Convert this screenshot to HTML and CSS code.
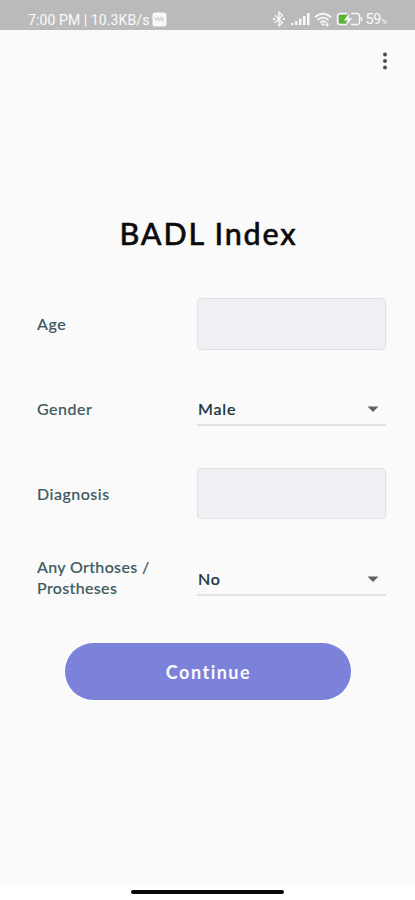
FILE: index.html
```html
<!DOCTYPE html>
<html lang="en">
<head>
<meta charset="utf-8">
<meta name="viewport" content="width=device-width, initial-scale=1">
<title>BADL Index</title>
<link rel="stylesheet" href="styles.css">
</head>
<body>
<header class="status">
  <div class="status-left">
    <span class="clock">7:00 PM | 10.3KB/s</span>
    <svg class="app" width="15" height="15" viewBox="0 0 15 15"><rect x=".5" y=".5" width="14" height="14" rx="2.5" fill="#f8f8f8"/><path d="M3 5.5l1.5 3 1.5-3 1.5 3 1.5-3 1.5 3 1-3" fill="none" stroke="#d4d4d4" stroke-width="1.3"/></svg>
  </div>
  <div class="status-right">
    <svg width="14" height="16" viewBox="0 0 14 16" fill="none" stroke="#f8f8f8" stroke-width="1.4"><path d="M3 4.200l7.400 7.200L7 14.700V1.300l3.400 3.300L3 11.800"/><path d="M1 8h2M11 8h2" stroke-width="1.8"/></svg>
    <svg width="20" height="14" viewBox="0 0 20 14" fill="#f8f8f8"><path d="M1 11h2.500v2H1zM5 9h2.500v4H5zM9 6.500h2.500v6.500H9zM13 4h2.500v9H13zM17 1h2.500v12H17z"/></svg>
    <svg width="18" height="15" viewBox="0 0 18 15" fill="none" stroke="#f8f8f8" stroke-width="1.8"><path d="M1 5.300Q9-1.700 17 5.300M3.500 8Q9 3.200 14.500 8M6 10.500Q9 8 11.500 10.300"/><path d="M7.500 11.500L9 13.200l1.500-1.700M13 10v4M11.500 12.500L13 14l1.500-1.500" stroke-width="1.2"/></svg>
    <svg width="27" height="14" viewBox="0 0 27 14"><path d="M11 1.500H4A2.500 2.500 0 0 0 1.500 4v6A2.500 2.500 0 0 0 4 12.500h7M15 1.500h6A2.500 2.500 0 0 1 23.500 4v6a2.500 2.500 0 0 1-2.500 2.500h-6" fill="none" stroke="#f8f8f8" stroke-width="1.400"/><path d="M3 3h8l-3 6h2v2.500H3z" fill="#55b92c"/><path d="M13.500 1.500L8.300 8h3.700l-1.500 5L16 6.300h-3.600z" fill="#fff"/><path d="M25.500 5v4" stroke="#f8f8f8" stroke-width="1.500"/></svg>
    <span class="battery">59<small>%</small></span>
  </div>
</header>
<main class="screen">
  <div class="toolbar">
    <svg width="6" height="18" viewBox="0 0 6 18" fill="#4d4d4d"><circle cx="3" cy="2.600" r="2"/><circle cx="3" cy="9" r="2"/><circle cx="3" cy="15.400" r="2"/></svg>
  </div>
  <h1>BADL Index</h1>
  <form class="form">
    <label for="age">Age</label>
    <input id="age" type="text">
    <span class="label">Gender</span>
    <div class="select"><span>Male</span><svg width="12" height="6" viewBox="0 0 12 6"><path d="M.5.500h11L6 6z" fill="#606060"/></svg></div>
    <label for="diagnosis">Diagnosis</label>
    <input id="diagnosis" class="short" type="text">
    <span class="label orthoses">Any Orthoses /<br>Prostheses</span>
    <div class="select"><span>No</span><svg width="12" height="6" viewBox="0 0 12 6"><path d="M.5.500h11L6 6z" fill="#606060"/></svg></div>
  </form>
  <button type="button" class="continue">Continue</button>
</main>
<footer class="nav"><div class="handle"></div></footer>
</body>
</html>
```
FILE: styles.css
```css
* { box-sizing: border-box; }
body {
  margin: 0;
  height: 900px;
  display: flex;
  flex-direction: column;
  overflow: hidden;
  background: #fff;
  font-family: Lato, "Open Sans", sans-serif;
}
.status {
  height: 30px;
  padding: 9px 28px 0 28px;
  display: flex;
  justify-content: space-between;
  background: #bababa;
  color: #fafafa;
  font: 14px/21px Roboto, sans-serif;
}
.status-left, .status-right { display: flex; align-items: center; height: 21px; }
.clock { white-space: nowrap; letter-spacing: .1px; padding-top: 2px; }
.app { margin-left: 2px; }
.status-right { gap: 4px; }
.status-right svg { margin-top: -1px; }
.battery { margin-left: -2px; font-size: 14.5px; padding-top: 2px; letter-spacing: -.2px; }
.battery small { font-size: 8px; }
.screen {
  height: 854px;
  background: #fafafa;
  display: flex;
  flex-direction: column;
}
.toolbar {
  height: 62px;
  padding: 22px 27px 0 0;
  display: flex;
  justify-content: flex-end;
}
h1 {
  margin: 121px 0 0;
  height: 40px;
  padding-left: 2px;
  text-align: center;
  color: #0b0b0b;
  font-size: 30.5px;
  line-height: 40px;
  font-weight: 500;
  letter-spacing: 1.800px;
  -webkit-text-stroke: .5px #0b0b0b;
}
.form {
  margin: 45px 29px 0 37px;
  display: grid;
  grid-template-columns: 160px 189px;
  grid-template-rows: repeat(4, 52px);
  row-gap: 33px;
  align-items: center;
}
.form label, .label {
  padding-bottom: 1px;
  color: #3f5b62;
  font-size: 16px;
  line-height: 21px;
  letter-spacing: .5px;
  font-weight: 500;
  -webkit-text-stroke: .15px #3f5b62;
}
.form .orthoses { letter-spacing: .35px; padding-bottom: 4px; }
.form input {
  width: 189px;
  height: 52px;
  border: 1px solid #dfe1e4;
  border-radius: 4px;
  background: #eff0f4;
}
.form .short { height: 51px; align-self: start; }
.select {
  height: 34px;
  padding: 0 7px 0 1px;
  display: flex;
  align-items: center;
  justify-content: space-between;
  border-bottom: 2px solid #dfe2e5;
  color: #20363c;
  font-size: 16px;
  letter-spacing: .8px;
  font-weight: 500;
  -webkit-text-stroke: .2px #20363c;
}
.select svg { margin-top: 2px; }
.continue {
  width: 286px;
  height: 57px;
  margin: 38px 0 0 65px;
  border: 0;
  border-radius: 29px;
  background: #7c81da;
  color: #fafaff;
  font: 700 18px/57px Lato, sans-serif;
  letter-spacing: 1.500px;
  padding: 1px 0 0 1px;
}
.nav {
  height: 16px;
  padding-top: 6px;
  display: flex;
  justify-content: center;
}
.handle { width: 153px; height: 4px; border-radius: 2px; background: #080808; }
```
